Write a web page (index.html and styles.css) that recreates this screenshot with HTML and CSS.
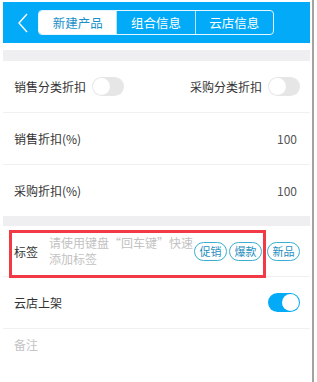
FILE: index.html
```html
<!DOCTYPE html>
<html lang="zh-CN">
<head>
    <meta charset="UTF-8">
    <title>新建产品</title>
    <link rel="stylesheet" href="styles.css">
</head>
<body>
<div class="frame">
    <div class="app">
        <div class="header">
            <div class="back">
                <svg width="12" height="20" viewBox="0 0 12 20"><path d="M10 1 L2 10 L10 19" fill="none" stroke="#ffffff" stroke-width="1.4"/></svg>
            </div>
            <div class="tabs">
                <div class="tab active">新建产品</div>
                <div class="tab">组合信息</div>
                <div class="tab">云店信息</div>
            </div>
        </div>

        <div class="gap top"></div>

        <div class="row">
            <div class="pair">
                <span class="label">销售分类折扣</span>
                <span class="switch"></span>
            </div>
            <div class="pair">
                <span class="label">采购分类折扣</span>
                <span class="switch"></span>
            </div>
        </div>
        <div class="row">
            <span class="label">销售折扣(%)</span>
            <span class="value">100</span>
        </div>
        <div class="row last">
            <span class="label">采购折扣(%)</span>
            <span class="value">100</span>
        </div>

        <div class="gap"></div>

        <div class="row tag-row">
            <span class="label">标签</span>
            <span class="hint">请使用键盘“回车键”快速<br>添加标签</span>
            <div class="tags">
                <span class="tag">促销</span>
                <span class="tag">爆款</span>
                <span class="tag">新品</span>
            </div>
            <div class="mark"></div>
        </div>
        <div class="row">
            <span class="label">云店上架</span>
            <span class="switch on"></span>
        </div>
        <div class="row last remark">
            <span class="label muted">备注</span>
        </div>
    </div>
</div>
</body>
</html>
```

FILE: styles.css
```css
body {
    margin: 0;
    background-color: #ffffff;
    font-family: "Noto Sans CJK SC", "Liberation Sans", sans-serif;
    font-size: 12px;
    color: #333333;
}

.frame {
    width: 314px;
    height: 382px;
    border-right: 2px solid #a3a3a3;
    padding-top: 2px;
    box-sizing: border-box;
}

.app {
    width: 307px;
    margin-left: 3px;
}

.header {
    display: flex;
    align-items: center;
    height: 41px;
    background-color: #03aaf7;
}

.back {
    width: 35px;
    display: flex;
    justify-content: center;
    padding-left: 4px;
    box-sizing: border-box;
}

.back svg {
    display: block;
}

.tabs {
    display: flex;
    width: 236px;
    height: 25px;
    border: 1px solid #e6f6fe;
    border-radius: 4px;
    box-sizing: border-box;
    overflow: hidden;
}

.tab {
    flex: 1;
    display: flex;
    align-items: center;
    justify-content: center;
    color: #ffffff;
    font-size: 12.5px;
    border-left: 1px solid #b8e4fa;
}

.tab:first-child {
    border-left: none;
}

.tab.active {
    background-color: #ffffff;
    color: #1a8fc9;
}

.gap {
    height: 10px;
    background-color: #efeff2;
}

.gap.top {
    height: 11px;
    margin-top: 7px;
}

.row {
    position: relative;
    display: flex;
    align-items: center;
    justify-content: space-between;
    height: 51px;
    padding: 0 10px 0 11px;
    border-bottom: 1px solid #f0f0f0;
}

.row.last {
    border-bottom: none;
}

.row.remark {
    align-items: flex-start;
    padding-top: 7px;
}

.pair {
    display: flex;
    align-items: center;
}

.label {
    color: #333333;
    flex-shrink: 0;
}

.muted {
    color: #c4c4c4;
}

.value {
    color: #555555;
    padding-right: 3px;
}

.switch {
    position: relative;
    width: 32px;
    height: 19px;
    margin-left: 6px;
    border-radius: 10px;
    background-color: #e6e6e6;
}

.switch:after {
    content: '';
    position: absolute;
    left: 1px;
    top: 1px;
    width: 17px;
    height: 17px;
    border-radius: 50%;
    background-color: #ffffff;
}

.switch.on {
    background-color: #03aaf7;
}

.switch.on:after {
    left: auto;
    right: 1px;
}

.tag-row {
    justify-content: flex-start;
    height: 50px;
}

.hint {
    flex-shrink: 0;
    margin-left: 11px;
    white-space: nowrap;
    line-height: 16px;
    color: #c2c2c2;
}

.tags {
    display: flex;
    margin-left: auto;
    gap: 2px;
}

.tag {
    display: inline-flex;
    align-items: center;
    justify-content: center;
    width: 33px;
    height: 19px;
    border: 1px solid #3aaed0;
    border-radius: 10px;
    box-sizing: border-box;
    color: #1f8fc0;
    font-size: 11px;
}

.tag:last-child {
    margin-left: 3px;
}

.mark {
    position: absolute;
    left: 6px;
    top: 4px;
    width: 257px;
    height: 48px;
    border: 3px solid #f23a47;
    box-sizing: border-box;
}
```
